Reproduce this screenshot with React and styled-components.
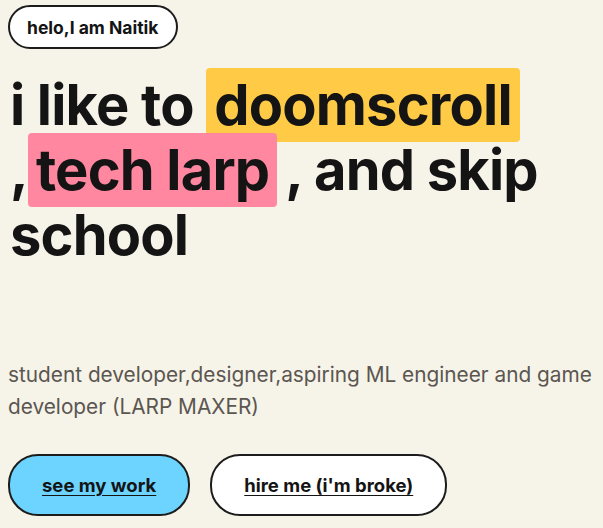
import React from 'react';
import styled, { createGlobalStyle } from 'styled-components';

const GlobalStyle = createGlobalStyle`
  body {
    margin: 0;
    background: #f6f3e9;
    font-family: Inter, "Noto Sans", sans-serif;
    color: #141414;
  }
`;

const Hero = styled.section`
  padding: 5px 8px 0 8px;
  display: flex;
  flex-direction: column;
  align-items: flex-start;
`;

const Badge = styled.div`
  border: 2px solid #1c1c1c;
  background: #ffffff;
  border-radius: 999px;
  padding: 0 17px;
  height: 40px;
  display: flex;
  align-items: center;
  font-size: 17.5px;
  font-weight: 700;
`;

const Heading = styled.h1`
  margin: 24px 0 0 2px;
  font-size: 56px;
  line-height: 65px;
  font-weight: 700;
  letter-spacing: -0.8px;
  max-width: 560px;
`;

const Mark = styled.span`
  background: ${p => p.color};
  border-radius: 4px;
  padding: 3px 8px;
  margin-right: ${p => p.$after || 0}px;
`;

const Lead = styled.p`
  margin: 91px 0 0 0;
  font-size: 20.8px;
  line-height: 32px;
  color: #5b5650;
  max-width: 595px;
`;

const Actions = styled.div`
  display: flex;
  gap: 20px;
  margin-top: 31px;
`;

const Button = styled.a`
  display: flex;
  align-items: center;
  justify-content: center;
  height: 58px;
  padding: 0 32px;
  border: 2px solid #1c1c1c;
  border-radius: 30px;
  background: ${p => p.$bg};
  color: #141414;
  font-size: 18.5px;
  font-weight: 700;
  text-decoration: underline;
  text-underline-offset: 3px;
  cursor: pointer;
`;

export default function App() {
  return (
    <>
      <GlobalStyle />
      <Hero>
        <Badge>helo,I am Naitik</Badge>
        <Heading>
          i like to <Mark color="#ffca45">doomscroll</Mark> ,<Mark color="#ff87a0" $after={8}>tech larp</Mark>, and skip school
        </Heading>
        <Lead>
          student developer,designer,aspiring ML engineer and game developer (LARP MAXER)
        </Lead>
        <Actions>
          <Button $bg="#6dd3ff">see my work</Button>
          <Button $bg="#ffffff">hire me (i'm broke)</Button>
        </Actions>
      </Hero>
    </>
  );
}
